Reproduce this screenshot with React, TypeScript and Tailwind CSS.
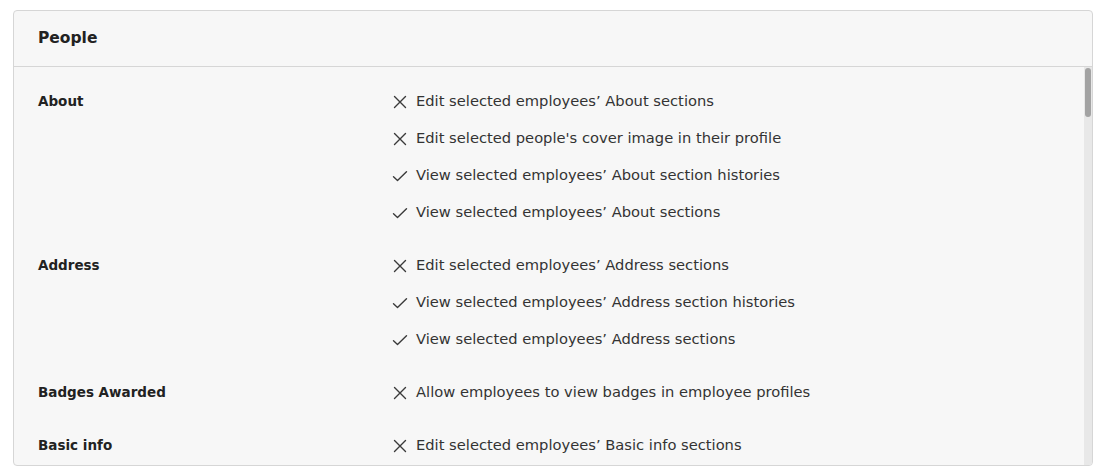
type Perm = { ok: boolean; text: string };

const groups: { label: string; perms: Perm[] }[] = [
  {
    label: "About",
    perms: [
      { ok: false, text: "Edit selected employees’ About sections" },
      { ok: false, text: "Edit selected people's cover image in their profile" },
      { ok: true, text: "View selected employees’ About section histories" },
      { ok: true, text: "View selected employees’ About sections" },
    ],
  },
  {
    label: "Address",
    perms: [
      { ok: false, text: "Edit selected employees’ Address sections" },
      { ok: true, text: "View selected employees’ Address section histories" },
      { ok: true, text: "View selected employees’ Address sections" },
    ],
  },
  {
    label: "Badges Awarded",
    perms: [{ ok: false, text: "Allow employees to view badges in employee profiles" }],
  },
  {
    label: "Basic info",
    perms: [{ ok: false, text: "Edit selected employees’ Basic info sections" }],
  },
];

function Icon({ ok }: { ok: boolean }) {
  return (
    <svg viewBox="0 0 16 16" className="w-[16px] h-[16px] shrink-0" fill="none" stroke="#3a3a3a" strokeWidth={1.4} strokeLinecap="round" strokeLinejoin="round">
      {ok ? <path d="M1.5 8.8 L5.5 12.5 L14.5 3.8" /> : <path d="M2.5 2.5 L13.5 13.5 M13.5 2.5 L2.5 13.5" />}
    </svg>
  );
}

export default function App() {
  return (
    <div className="w-[1102px] h-[476px] bg-white pt-[10px] pl-[13px] pr-[9px] font-['DejaVu_Sans',sans-serif]">
      <div className="h-[456px] flex flex-col border border-[#d6d6d6] rounded-[4px] bg-[#f7f7f7] overflow-hidden">
        <div className="h-[56px] shrink-0 flex items-center px-6 border-b border-[#d6d6d6]">
          <h2 className="text-[15.5px] font-bold text-[#222]">People</h2>
        </div>
        <div className="relative flex-1 min-h-0">
          <div className="h-full overflow-y-auto pt-[16px] pl-6 [scrollbar-width:none]">
            <div className="flex flex-col gap-4">
              {groups.map((g) => (
                <div key={g.label} className="flex">
                  <div className="w-[354px] shrink-0 h-[37px] flex items-center text-[13.5px] font-bold text-[#222]">
                    {g.label}
                  </div>
                  <ul className="flex flex-col">
                    {g.perms.map((p) => (
                      <li key={p.text} className="h-[37px] flex items-center gap-[8px] text-[14.7px] text-[#333]">
                        <Icon ok={p.ok} />
                        <span>{p.text}</span>
                      </li>
                    ))}
                  </ul>
                </div>
              ))}
            </div>
          </div>
          {/* scrollbar overlay */}
          <div className="absolute right-0 top-0 bottom-0 w-[8px] bg-[#e8e8e8]">
            <div className="mt-[1px] h-[49px] mx-[1px] rounded-full bg-[#a3a3a3]" />
          </div>
        </div>
      </div>
    </div>
  );
}
